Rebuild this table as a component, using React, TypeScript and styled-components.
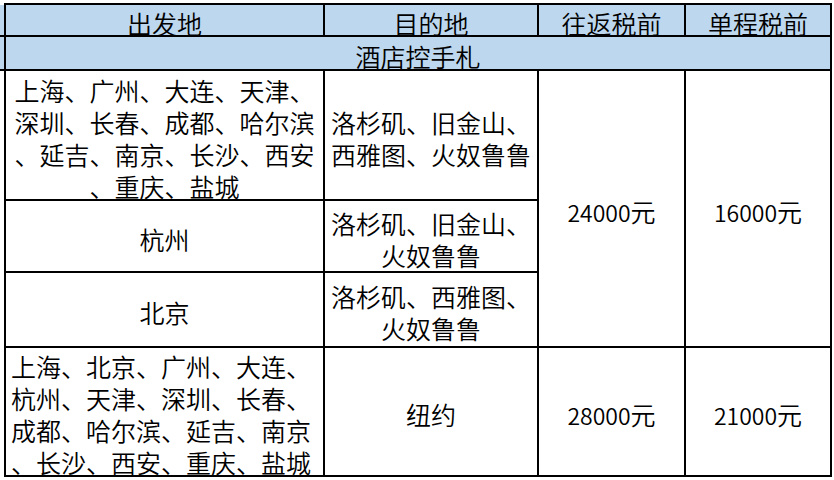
import React from 'react';
import styled, { createGlobalStyle } from 'styled-components';

const Global = createGlobalStyle`
  html, body { margin: 0; padding: 0; background: #fff; }
  body {
    font-family: "Noto Sans CJK SC", "Noto Sans", sans-serif;
    font-weight: 350;
    color: #000;
  }
`;

const BLUE = '#BDD7EE';

const Sheet = styled.div`
  width: 834px;
  height: 480px;
  box-sizing: border-box;
  padding: 3px 0 0 4px;
  overflow: hidden;
  background-image: linear-gradient(
    to bottom,
    transparent 5px,
    ${BLUE} 5px,
    ${BLUE} 35px,
    #000 35px,
    #000 37px,
    ${BLUE} 37px,
    ${BLUE} 69px,
    #000 69px,
    #000 71px,
    transparent 71px
  );
  background-size: 4px 100%;
  background-repeat: no-repeat;
`;

const Table = styled.div`
  display: grid;
  grid-template-columns: 317px 212px 145px 144px;
  grid-template-rows: 30px 32px 128px 70px 73px 127px;
  gap: 2px;
  padding: 2px;
  background: #000;
  width: max-content;
`;

const Cell = styled.div<{
  $bg?: string;
  $left?: boolean;
  $col?: string;
  $row?: string;
}>`
  box-sizing: border-box;
  background: ${(p) => p.$bg ?? '#fff'};
  grid-column: ${(p) => p.$col ?? 'auto'};
  grid-row: ${(p) => p.$row ?? 'auto'};
  display: flex;
  flex-direction: column;
  justify-content: center;
  align-items: ${(p) => (p.$left ? 'flex-start' : 'center')};
  text-align: ${(p) => (p.$left ? 'left' : 'center')};
  padding: 5px 0 0 ${(p) => (p.$left ? '5px' : '0')};
  font-size: 25px;
  line-height: 32px;
  white-space: nowrap;
  min-height: 0;
`;

const Line = styled.span`
  display: block;
  height: 32px;
`;

const Digits = styled.span`
  font-size: 23px;
`;

const Lines = ({ lines }: { lines: string[] }) => (
  <>
    {lines.map((l, i) => (
      <Line key={i}>{l}</Line>
    ))}
  </>
);

const Amount = ({ value }: { value: string }) => (
  <Line>
    <Digits>{value}</Digits>元
  </Line>
);

export default function App() {
  return (
    <>
      <Global />
      <Sheet>
        <Table>
          <Cell $bg={BLUE}>出发地</Cell>
          <Cell $bg={BLUE}>目的地</Cell>
          <Cell $bg={BLUE}>往返税前</Cell>
          <Cell $bg={BLUE}>单程税前</Cell>

          <Cell $bg={BLUE} $col="1 / 5">酒店控手札</Cell>

          <Cell $row="3">
            <Lines
              lines={[
                '上海、广州、大连、天津、',
                '深圳、长春、成都、哈尔滨',
                '、延吉、南京、长沙、西安',
                '、重庆、盐城',
              ]}
            />
          </Cell>
          <Cell $row="3" $col="2">
            <Lines lines={['洛杉矶、旧金山、', '西雅图、火奴鲁鲁']} />
          </Cell>
          <Cell $row="3 / 6" $col="3">
            <Amount value="24000" />
          </Cell>
          <Cell $row="3 / 6" $col="4">
            <Amount value="16000" />
          </Cell>

          <Cell $row="4" $col="1">杭州</Cell>
          <Cell $row="4" $col="2">
            <Lines lines={['洛杉矶、旧金山、', '火奴鲁鲁']} />
          </Cell>

          <Cell $row="5" $col="1">北京</Cell>
          <Cell $row="5" $col="2">
            <Lines lines={['洛杉矶、西雅图、', '火奴鲁鲁']} />
          </Cell>

          <Cell $row="6" $col="1" $left>
            <Lines
              lines={[
                '上海、北京、广州、大连、',
                '杭州、天津、深圳、长春、',
                '成都、哈尔滨、延吉、南京',
                '、长沙、西安、重庆、盐城',
              ]}
            />
          </Cell>
          <Cell $row="6" $col="2">纽约</Cell>
          <Cell $row="6" $col="3">
            <Amount value="28000" />
          </Cell>
          <Cell $row="6" $col="4">
            <Amount value="21000" />
          </Cell>
        </Table>
      </Sheet>
    </>
  );
}
